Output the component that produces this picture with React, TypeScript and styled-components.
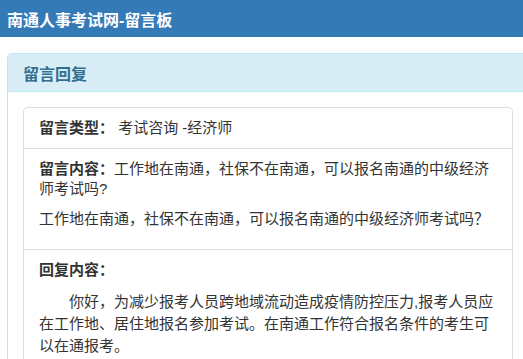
import { createGlobalStyle } from 'styled-components';
import styled from 'styled-components';

const GlobalStyle = createGlobalStyle`
  html, body {
    margin: 0;
    padding: 0;
    background: #fff;
    overflow-x: hidden;
  }
  body {
    font-family: 'Liberation Sans', 'Noto Sans CJK SC', sans-serif;
    font-size: 15px;
    color: #333;
  }
`;

const message = {
  type: '考试咨询 -经济师',
  content: '工作地在南通，社保不在南通，可以报名南通的中级经济师考试吗?',
  detail: '工作地在南通，社保不在南通，可以报名南通的中级经济师考试吗？',
  reply:
    '你好，为减少报考人员跨地域流动造成疫情防控压力,报考人员应在工作地、居住地报名参加考试。在南通工作符合报名条件的考生可以在通报考。',
};

export default function App() {
  return (
    <>
      <GlobalStyle />
      <Header>
        <SiteTitle>南通人事考试网-留言板</SiteTitle>
      </Header>
      <Panel>
        <PanelHeading>
          <PanelTitle>留言回复</PanelTitle>
        </PanelHeading>
        <PanelBody>
          <ListGroup>
            <ListItem>
              <Label>留言类型：</Label> {message.type}
            </ListItem>
            <ListItem>
              <Paragraph $gap={10}>
                <Label>留言内容：</Label>
                {message.content}
              </Paragraph>
              <Paragraph $gap={10}>{message.detail}</Paragraph>
            </ListItem>
            <ListItem>
              <Paragraph $gap={11}>
                <Label>回复内容：</Label>
              </Paragraph>
              <Reply>{message.reply}</Reply>
            </ListItem>
          </ListGroup>
        </PanelBody>
      </Panel>
    </>
  );
}

const Header = styled.header`
  box-sizing: border-box;
  height: 37px;
  padding: 0 7px;
  display: flex;
  align-items: center;
  background: #337ab7;
`;

const SiteTitle = styled.h1`
  margin: 0;
  font-size: 16px;
  font-weight: bold;
  color: #fff;
`;

const Panel = styled.section`
  box-sizing: border-box;
  width: 522px;
  margin: 16px 0 0 7px;
  border: 1px solid #bce8f1;
  border-radius: 4px;
  background: #fff;
`;

const PanelHeading = styled.div`
  box-sizing: border-box;
  height: 38px;
  padding: 0 15px;
  display: flex;
  align-items: center;
  background: #d9edf7;
  border-bottom: 1px solid #bce8f1;
  border-radius: 3px 3px 0 0;
`;

const PanelTitle = styled.h3`
  margin: 0;
  font-size: 16px;
  font-weight: bold;
  color: #31708f;
`;

const PanelBody = styled.div`
  padding: 15px;
`;

const ListGroup = styled.ul`
  margin: 0;
  padding: 0;
  list-style: none;
  border: 1px solid #ddd;
  border-radius: 4px;
`;

const ListItem = styled.li`
  padding: 10px 15px;
  line-height: 20px;
  & + & {
    border-top: 1px solid #ddd;
  }
`;

const Label = styled.b`
  font-weight: bold;
`;

const Paragraph = styled.p<{ $gap: number }>`
  margin: 0 0 ${p => p.$gap}px;
`;

const Reply = styled.p`
  margin: 0;
  line-height: 22px;
  text-indent: 2em;
`;
